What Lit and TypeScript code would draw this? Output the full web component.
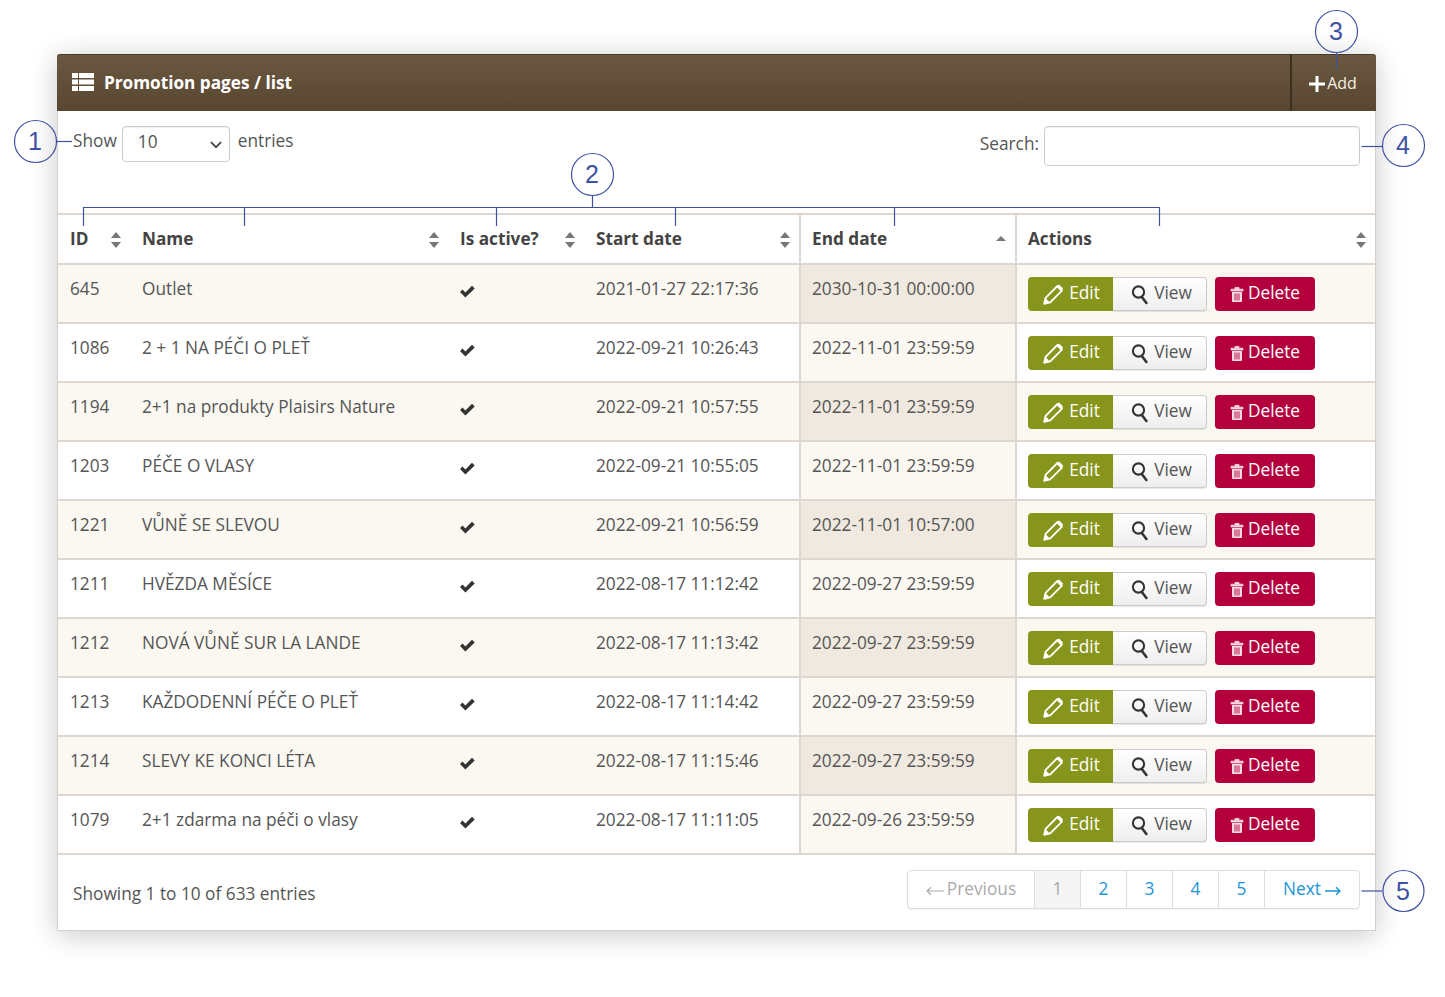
import { LitElement, html, css, svg } from "lit";
import { customElement } from "lit/decorators.js";

const rows = [
  ["645", "Outlet", "2021-01-27 22:17:36", "2030-10-31 00:00:00"],
  ["1086", "2 + 1 NA PÉČI O PLEŤ", "2022-09-21 10:26:43", "2022-11-01 23:59:59"],
  ["1194", "2+1 na produkty Plaisirs Nature", "2022-09-21 10:57:55", "2022-11-01 23:59:59"],
  ["1203", "PÉČE O VLASY", "2022-09-21 10:55:05", "2022-11-01 23:59:59"],
  ["1221", "VŮNĚ SE SLEVOU", "2022-09-21 10:56:59", "2022-11-01 10:57:00"],
  ["1211", "HVĚZDA MĚSÍCE", "2022-08-17 11:12:42", "2022-09-27 23:59:59"],
  ["1212", "NOVÁ VŮNĚ SUR LA LANDE", "2022-08-17 11:13:42", "2022-09-27 23:59:59"],
  ["1213", "KAŽDODENNÍ PÉČE O PLEŤ", "2022-08-17 11:14:42", "2022-09-27 23:59:59"],
  ["1214", "SLEVY KE KONCI LÉTA", "2022-08-17 11:15:46", "2022-09-27 23:59:59"],
  ["1079", "2+1 zdarma na péči o vlasy", "2022-08-17 11:11:05", "2022-09-26 23:59:59"],
];

const sortBoth = html`<svg class="sort" width="12" height="18" viewBox="0 0 12 18"><path d="M6 1l5 6H1z" fill="#777"/><path d="M6 17l5-6H1z" fill="#777"/></svg>`;
const sortAsc = html`<svg class="sort" width="12" height="18" viewBox="0 0 12 18"><path d="M6 5l5 5H1z" fill="#777"/></svg>`;
const check = html`<svg width="17" height="13" viewBox="0 0 17 13"><path d="M1 7l2.500-2.500 2.900 2.900L13 .8l2.700 2.600L6.400 12.600z" fill="#333"/></svg>`;
const pencil = html`<svg width="21" height="21" viewBox="0 0 21 21"><path d="M1.200 19.800l1.400-6L14.400 2l4.600 4.600L7.200 18.400z" fill="none" stroke="#fff" stroke-width="1.800" stroke-linejoin="round"/><path d="M15 1.200l1-.6 4 4-.6 1.200-1.800 1.200-4.400-4.400z" fill="#fff"/><path d="M1.200 19.800l1.400-5.600 4.200 4.200z" fill="#fff"/></svg>`;
const search = html`<svg width="18" height="21" viewBox="0 0 18 21"><circle cx="7.500" cy="8" r="5.600" fill="none" stroke="#333" stroke-width="2.100"/><path d="M10.800 13l4.600 6" fill="none" stroke="#333" stroke-width="2.600" stroke-linecap="round"/></svg>`;
const trash = html`<svg width="14" height="16" viewBox="0 0 14 16"><path d="M1 3.200h12v1.800H1z M5 3V1.400h4V3" fill="#f7dbe3" stroke="#f7dbe3" stroke-width=".8"/><path d="M2 6h10v9a1 1 0 0 1-1 1H3a1 1 0 0 1-1-1z" fill="#f7dbe3"/><path d="M5 7.500v7M7 7.500v7M9 7.500v7" stroke="#b3003c" stroke-width=".9"/></svg>`;
const listIcon = html`<svg width="22" height="18" viewBox="0 0 22 18"><path d="M0 0h6v5H0zM7 0h15v5H7zM0 6.500h6v5H0zM7 6.500h15v5H7zM0 13h6v5H0zM7 13h15v5H7z" fill="#fff"/></svg>`;
const plus = html`<svg class="plus" width="16" height="16" viewBox="0 0 16 16"><path d="M6.500 0h3v6.500H16v3H9.500V16h-3V9.500H0v-3h6.500z" fill="#fff"/></svg>`;
const chevron = html`<svg class="chev" width="12" height="8" viewBox="0 0 12 8"><path d="M1 1.200l5 5 5-5" fill="none" stroke="#444" stroke-width="1.800"/></svg>`;
const arrowL = html`<svg class="arr" width="18" height="10" viewBox="0 0 18 10"><path d="M18 5H1M5 1.200L1 5l4 3.800" fill="none" stroke="#aaa" stroke-width="1.200"/></svg>`;
const arrowR = html`<svg class="arr" width="16" height="10" viewBox="0 0 16 10"><path d="M0 5h15M11 1.200L15 5l-4 3.800" fill="none" stroke="#1a94d8" stroke-width="1.400"/></svg>`;

const overlay = svg`
  <g fill="none" stroke="#3f51a3" stroke-width="1.200">
    <circle cx="35.500" cy="141.500" r="21"/><path d="M57 141.500h15"/>
    <circle cx="592.500" cy="174.500" r="21"/>
    <path d="M592.500 195.500v12.500M83.500 226v-18.500h1076V226M244.500 208v18M496.500 208v18M675.500 208v18M894.500 208v18"/>
    <circle cx="1336.500" cy="31.500" r="21"/><path d="M1336.500 52.500v17"/>
    <circle cx="1403.500" cy="145.500" r="21"/><path d="M1361.500 146.500h21"/>
    <circle cx="1403.500" cy="891" r="20.500"/><path d="M1361.500 891h21"/>
  </g>
  <g class="num" fill="#3f51a3" text-anchor="middle">
    <text x="35" y="150">1</text><text x="592" y="183">2</text>
    <text x="1336" y="40">3</text><text x="1403" y="154">4</text><text x="1403" y="900">5</text>
  </g>`;

@customElement("app-root")
export class AppRoot extends LitElement {
  static styles = css`
    :host { display: block; width: 1445px; height: 997px; background: #fff; position: relative; overflow: hidden;
      font-family: "Open Sans", sans-serif; font-size: 17.25px; color: #555; }
    .wrap { padding: 54px 0 0 57px; }
    .panel { width: 1319px; height: 877px; box-sizing: border-box; border: 1px solid #d8cfc9; border-top: 0; border-radius: 3px 3px 0 0;
      background: #fff; box-shadow: 0 4px 28px rgba(0,0,0,.22); display: flex; flex-direction: column; }
    .head { height: 57px; margin: 0 -1px; flex: none; display: flex; align-items: stretch; justify-content: space-between; color: #fff;
      background: linear-gradient(#6b5841, #594630); border-top: 1px solid #4a3a28; border-radius: 3px 3px 0 0; box-sizing: border-box; }
    .title { display: flex; align-items: center; gap: 10px; padding: 0 0 2px 15px; font-weight: 700; font-size: 17.2px; color: #fff; }
    .add { width: 86px; box-sizing: border-box; border-left: 2px solid #3b2f22; display: flex; align-items: center; justify-content: center; gap: 2px; font-size: 16px; padding: 0 2px 1px 0; color: #f6efe4; }
    .plus { position: relative; top: 1.500px; }
    .tools { height: 102px; flex: none; display: flex; justify-content: space-between; padding: 15px 15px 0; box-sizing: border-box; }
    .len { display: flex; align-items: flex-start; gap: 5px; }
    .len span { line-height: 30px; }
    .sel { width: 108px; height: 36px; box-sizing: border-box; border: 1px solid #ccc; border-radius: 4px; display: flex; align-items: center; justify-content: space-between; padding: 0 7px 4px 15px; margin-right: 3px; box-shadow: inset 0 1px 1px rgba(0,0,0,.06); }
    .chev { position: relative; top: 3px; }
    .find { display: flex; align-items: flex-start; gap: 5px; }
    .find span { line-height: 36px; }
    .inp { width: 316px; height: 40px; box-sizing: border-box; border: 1px solid #ccc; border-radius: 4px; box-shadow: inset 0 1px 1px rgba(0,0,0,.06); }
    table { border-collapse: separate; border-spacing: 0; width: 1317px; table-layout: fixed; flex: none; }
    th, td { padding: 0 12px; text-align: left; box-sizing: border-box; }
    th { height: 52px; padding-bottom: 1px; border-top: 2px solid #ddd6d1; border-bottom: 2px solid #ddd6d1; font-weight: 700; color: #444; position: relative; font-size: 17.2px; }
    td { height: 59px; border-bottom: 2px solid #ddd6d1; vertical-align: top; padding-top: 12px; line-height: 24px; }
    tr:nth-child(odd) td { background: #fbf8f2; }
    tr:nth-child(odd) td.sorted { background: #f0e9df; }
    tr:nth-child(even) td.sorted { background: #fbf8f2; }
    .lb { border-left: 2px solid #ddd6d1; }
    th.lb, td.lb { padding-left: 11px; }
    .sort { position: absolute; right: 8px; top: 16px; }
    td.ck { padding: 20px 0 0 11px; line-height: 13px; }
    .ck svg { display: block; }
    td.acts { padding-top: 12px; }
    .btns { display: flex; }
    .btn { height: 34px; box-sizing: border-box; display: flex; align-items: center; justify-content: center; gap: 4px; border-radius: 4px; font-size: 17.25px; }
    .btn span { position: relative; top: -1px; }
    .edit { width: 85px; background: #88951c; color: #fff; border-radius: 4px 0 0 4px; gap: 5px; padding-left: 2px; }
    .view { width: 94px; color: #555; background: linear-gradient(#fff, #eee); border: 1px solid #ccc; border-left: 0; border-radius: 0 4px 4px 0; box-shadow: 0 1px 1px rgba(0,0,0,.1); gap: 5px; padding-left: 4px; }
    .del { width: 100px; background: #b3003c; color: #fff; margin-left: 8px; }
    .foot { flex: 1; display: flex; justify-content: space-between; padding: 15px 15px 0; }
    .info { line-height: 47px; }
    .pages { display: flex; height: 39px; box-sizing: border-box; border: 1px solid #ddd; border-radius: 4px; box-shadow: 0 1px 2px rgba(0,0,0,.05); }
    .pages div { width: 46px; box-sizing: border-box; border-left: 1px solid #ddd; display: flex; align-items: center; justify-content: center; gap: 4px; color: #1a94d8; padding-bottom: 2px; }
    .pages .prev { width: 126px; border-left: 0; color: #aaa; gap: 3px; }
    .pages .cur { background: #f5f5f5; color: #aaa; }
    .pages .next { width: 95px; }
    .arr { position: relative; top: 2px; }
    .over { position: absolute; left: 0; top: 0; pointer-events: none; }
    .num { font-family: "Liberation Sans", sans-serif; font-size: 25px; }
  `;

  render() {
    return html`
      <div class="wrap"><div class="panel">
        <div class="head">
          <div class="title">${listIcon}<span>Promotion pages / list</span></div>
          <div class="add">${plus}<span>Add</span></div>
        </div>
        <div class="tools">
          <div class="len"><span>Show</span><div class="sel"><span>10</span>${chevron}</div><span>entries</span></div>
          <div class="find"><span>Search:</span><div class="inp"></div></div>
        </div>
        <table>
          <colgroup><col style="width:72px"><col style="width:318px"><col style="width:136px"><col style="width:215px"><col style="width:216px"><col></colgroup>
          <thead><tr>
            <th>ID${sortBoth}</th><th>Name${sortBoth}</th><th>Is active?${sortBoth}</th><th>Start date${sortBoth}</th>
            <th class="lb">End date${sortAsc}</th><th class="lb">Actions${sortBoth}</th>
          </tr></thead>
          <tbody>
            ${rows.map((r) => html`<tr>
              <td>${r[0]}</td><td>${r[1]}</td><td class="ck">${check}</td><td>${r[2]}</td>
              <td class="lb sorted">${r[3]}</td>
              <td class="lb acts"><div class="btns">
                <div class="btn edit">${pencil}<span>Edit</span></div>
                <div class="btn view">${search}<span>View</span></div>
                <div class="btn del">${trash}<span>Delete</span></div>
              </div></td>
            </tr>`)}
          </tbody>
        </table>
        <div class="foot">
          <div class="info">Showing 1 to 10 of 633 entries</div>
          <div class="pages">
            <div class="prev">${arrowL}<span>Previous</span></div><div class="cur">1</div><div>2</div><div>3</div><div>4</div><div>5</div><div class="next"><span>Next</span>${arrowR}</div>
          </div>
        </div>
      </div></div>
      <svg class="over" width="1445" height="997" viewBox="0 0 1445 997">${overlay}</svg>
    `;
  }
}
